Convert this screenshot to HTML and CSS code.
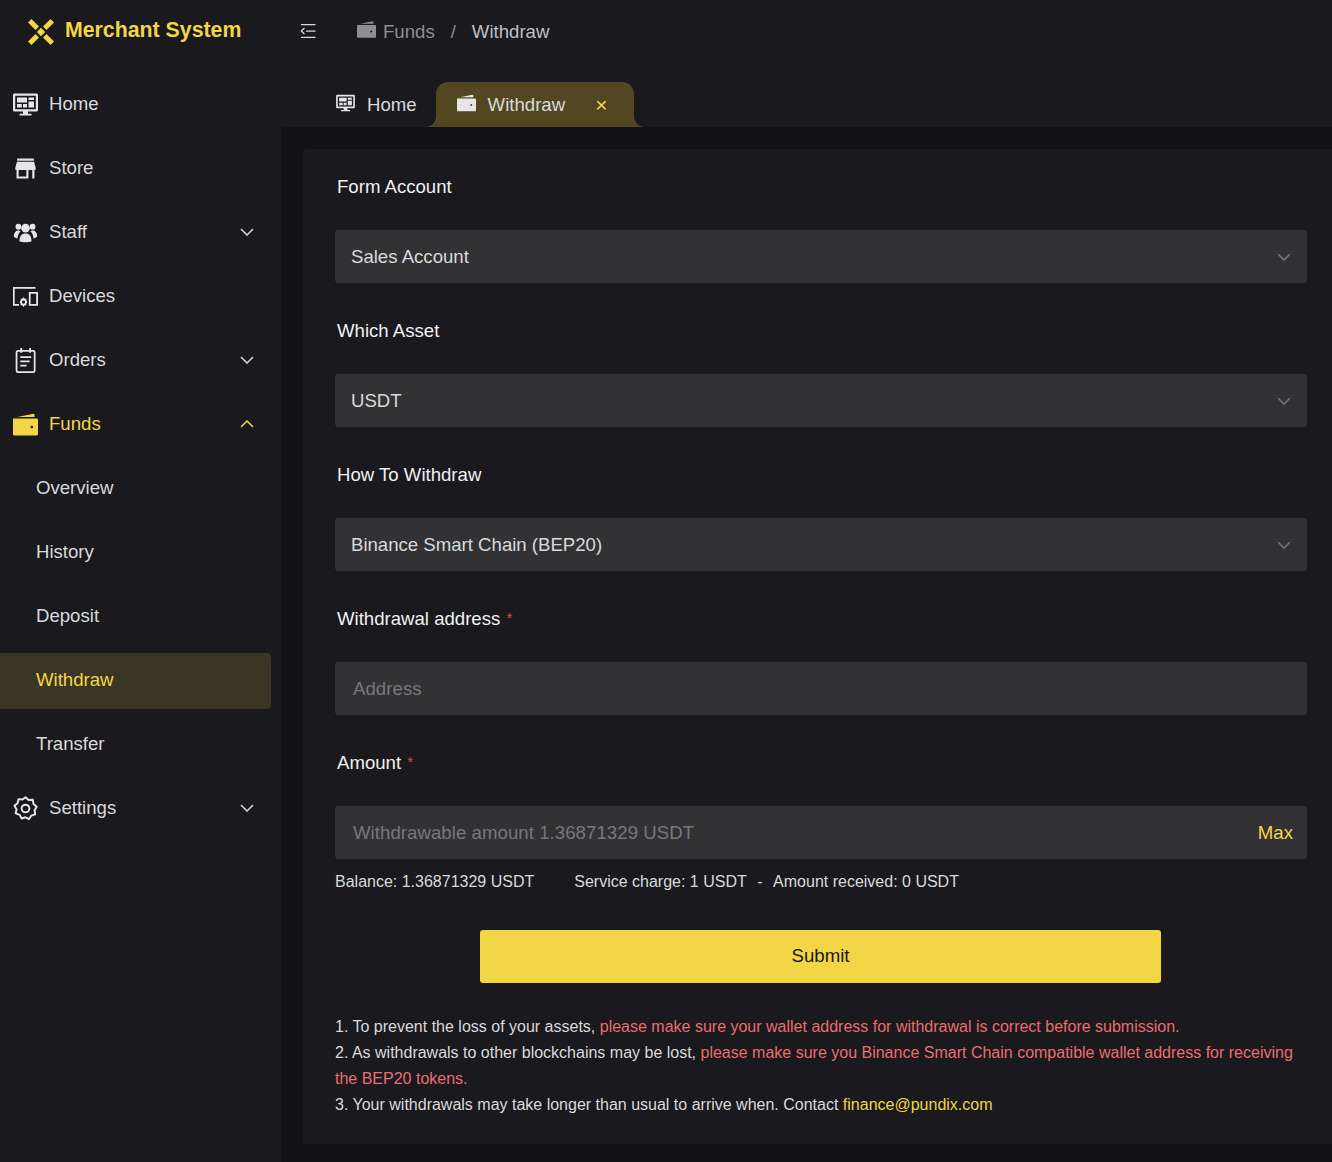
FILE: index.html
```html
<!DOCTYPE html>
<html lang="en">
<head>
<meta charset="utf-8">
<title>Merchant System</title>
<link rel="stylesheet" href="styles.css">
</head>
<body>
<svg class="defs" width="0" height="0" aria-hidden="true">
  <defs>
    <symbol id="i-wallet" viewBox="0 0 25 22">
      <path d="M0.500 4.200 20.500 0.200c.6-.1 1 .2 1 .8v2.400H5Z"/>
      <path fill-rule="evenodd" d="M0 5h23.800c.7 0 1.200.5 1.200 1.200v14.600c0 .7-.5 1.200-1.200 1.200H1.200C.5 22 0 21.500 0 20.800Zm17.500 8.500a1.300 1.300 0 1 0 2.600 0 1.300 1.300 0 0 0-2.600 0Z"/>
    </symbol>
    <symbol id="i-monitor" viewBox="0 0 25 24">
      <path fill-rule="evenodd" d="M1.500 1h22c.8 0 1.500.7 1.500 1.500v15c0 .8-.7 1.500-1.500 1.500H15v2.200h3.500V23h-12v-1.800H10V19H1.500C.7 19 0 18.300 0 17.500v-15C0 1.700.7 1 1.500 1Zm.7 2.200v13.600h20.600V3.200Z"/>
      <path d="M4 5h10v5H4ZM15.500 5H21v2.500h-5.500ZM15.500 9H21v6h-5.500ZM4 11.500h4.800V15H4ZM10 11.500h4V15h-4Z"/>
    </symbol>
    <symbol id="i-chev" viewBox="0 0 14 8">
      <path d="M1 1l6 6 6-6" fill="none" stroke="currentColor" stroke-width="1.500"/>
    </symbol>
  </defs>
</svg>
<div class="app">
  <aside class="sidebar">
    <div class="logo">
      <svg class="logo-mark" viewBox="0 0 26 26" aria-hidden="true">
        <path d="M3.500 0 11 7.500 7.500 11 0 3.500ZM22.500 0 26 3.500 18.500 11 15 7.500ZM7.500 15 11 18.500 3.500 26 0 22.500ZM18.500 15 26 22.500 22.500 26 15 18.500Z"/>
        <path d="M13 8.800 17.200 13 13 17.200 8.800 13Z"/>
      </svg>
      <span class="logo-text">Merchant System</span>
    </div>
    <nav class="menu">
      <a class="item"><svg class="ic"><use href="#i-monitor"/></svg><span>Home</span></a>
      <a class="item">
        <svg class="ic" viewBox="0 0 24 24"><path fill-rule="evenodd" d="M4 2.400h16v2.200H4ZM3.800 5.600h16.400l1.600 5.600v2h-1.200v8.400H3.400v-8.400H2.200v-2ZM5.400 13.500v6.200h7.400v-6.200Zm9.400 0v8.100h3.700v-8.100Z"/></svg>
        <span>Store</span>
      </a>
      <a class="item">
        <svg class="ic" viewBox="0 0 24 24"><circle cx="12" cy="7.800" r="4.100"/><circle cx="5.200" cy="6.500" r="2.800"/><circle cx="18.800" cy="6.500" r="2.800"/><path d="M6.200 20.500c0-5 2-7.500 5.800-7.500s5.800 2.500 5.800 7.500c-3 1.300-8.600 1.300-11.600 0ZM.8 15.800c0-3.200 1.600-5.800 4.200-5.800 1 0 1.800.4 2.200 1-1.800 1.600-2.700 3.700-2.900 6.700C3 17.500 1.600 16.800.8 15.800ZM23.200 15.800c0-3.200-1.600-5.800-4.200-5.800-1 0-1.800.4-2.200 1 1.800 1.600 2.700 3.700 2.900 6.700 1.300-.2 2.700-.9 3.500-1.900Z"/></svg>
        <span>Staff</span><svg class="chev"><use href="#i-chev"/></svg>
      </a>
      <a class="item">
        <svg class="ic" viewBox="0 0 25 25"><path d="M0 3h22.500v1.700H1.700V20H6v1.700H0Z"/><path fill-rule="evenodd" d="M15.800 8h9.200v13.700h-9.200Zm1.800 1.800v10.100h5.600V9.800ZM10.500 13.200l1.100 1.400 1.700.3.200 1.800.9 1.400-.9 1.400-.2 1.800-1.700.3-1.100 1.400-1.100-1.400-1.700-.3-.2-1.800-.9-1.400.9-1.400.2-1.800 1.700-.3Zm0 3.300a1.600 1.600 0 1 0 0 3.200 1.600 1.600 0 0 0 0-3.200Z"/></svg>
        <span>Devices</span>
      </a>
      <a class="item">
        <svg class="ic" viewBox="0 0 24 24"><path d="M7 0h1.800v4.500H7ZM15.500 0h1.800v4.500h-1.800Z"/><rect x="3.400" y="2.800" width="17.400" height="20.400" rx="1.500" fill="none" stroke="currentColor" stroke-width="1.700"/><path d="M7 8h10.500v1.700H7ZM7 12h9v1.700H7ZM7 16h6v1.700H7Z"/></svg>
        <span>Orders</span><svg class="chev"><use href="#i-chev"/></svg>
      </a>
      <a class="item active">
        <svg class="ic"><use href="#i-wallet"/></svg>
        <span>Funds</span><svg class="chev up"><use href="#i-chev"/></svg>
      </a>
      <a class="item sub">Overview</a>
      <a class="item sub">History</a>
      <a class="item sub">Deposit</a>
      <a class="item sub selected">Withdraw</a>
      <a class="item sub">Transfer</a>
      <a class="item">
        <svg class="ic" viewBox="0 0 24 24"><path d="M12 1.200l3 2.700 4-.2.700 3.900 3 2.700-2 3.400.6 3.900-3.800 1.300-2.200 3.300-3.300-1.800-3.700 1.200-1.900-3.500-3.800-1.400.8-3.900-2-3.400 3-2.500.9-3.900 3.900.3Z" fill="none" stroke="currentColor" stroke-width="1.900" stroke-linejoin="round"/><circle cx="12" cy="12" r="3.700" fill="none" stroke="currentColor" stroke-width="1.900"/></svg>
        <span>Settings</span><svg class="chev"><use href="#i-chev"/></svg>
      </a>
    </nav>
  </aside>
  <main class="main">
    <header class="topbar">
      <svg class="collapse" viewBox="0 0 16 14" aria-hidden="true"><path d="M1 0h14.500v1.300H1ZM6 6.400h9.500v1.300H6ZM1 12.700h14.500V14H1Z"/><path class="collapse-arrow" d="M4.500 4 1.300 7l3.200 3"/></svg>
      <div class="crumbs">
        <svg class="crumb-ic"><use href="#i-wallet"/></svg>
        <span class="crumb-dim">Funds</span>
        <span class="crumb-sep">/</span>
        <span class="crumb-cur">Withdraw</span>
      </div>
    </header>
    <div class="tabs">
      <div class="tab"><svg class="tab-ic"><use href="#i-monitor"/></svg><span class="tab-label">Home</span></div>
      <div class="tab tab-on"><svg class="tab-ic"><use href="#i-wallet"/></svg><span class="tab-label">Withdraw</span><span class="tab-x">×</span></div>
    </div>
    <div class="content">
      <section class="card">
        <label class="lbl">Form Account</label>
        <div class="field"><span>Sales Account</span><svg class="sel-chev"><use href="#i-chev"/></svg></div>
        <label class="lbl">Which Asset</label>
        <div class="field"><span>USDT</span><svg class="sel-chev"><use href="#i-chev"/></svg></div>
        <label class="lbl">How To Withdraw</label>
        <div class="field"><span>Binance Smart Chain (BEP20)</span><svg class="sel-chev"><use href="#i-chev"/></svg></div>
        <label class="lbl">Withdrawal address <sup class="req">*</sup></label>
        <div class="field input"><span class="ph">Address</span></div>
        <label class="lbl">Amount <sup class="req">*</sup></label>
        <div class="field input amount"><span class="ph">Withdrawable amount 1.36871329 USDT</span><span class="max">Max</span></div>
        <div class="fees">
          <span>Balance: 1.36871329 USDT</span>
          <span>Service charge: 1 USDT<span class="dash">-</span>Amount received: 0 USDT</span>
        </div>
        <div class="submit-row"><button class="submit" type="button">Submit</button></div>
        <div class="notes">
          <p>1. To prevent the loss of your assets, <span class="warn">please make sure your wallet address for withdrawal is correct before submission.</span></p>
          <p>2. As withdrawals to other blockchains may be lost, <span class="warn">please make sure you Binance Smart Chain compatible wallet address for receiving the BEP20 tokens.</span></p>
          <p>3. Your withdrawals may take longer than usual to arrive when. Contact <span class="mail">finance@pundix.com</span></p>
        </div>
      </section>
    </div>
  </main>
</div>
</body>
</html>
```
FILE: styles.css
```css
* { box-sizing: border-box; }
html, body { margin: 0; height: 100%; }
body {
  background: #19191e;
  color: #d9d9db;
  font-family: "Liberation Sans", Arial, sans-serif;
  font-size: 18.6px;
  overflow: hidden;
}
.defs { position: absolute; }
svg { fill: currentColor; }
.app { display: flex; height: 1162px; }

.sidebar { width: 281px; flex: none; background: #19191e; }
.logo { display: flex; align-items: center; height: 61px; padding-left: 28px; gap: 11px; color: #f2d646; }
.logo-mark { width: 26px; height: 26px; margin-top: 2px; }
.logo-text { font-size: 21.3px; font-weight: 700; margin-top: -1px; }
.menu { display: flex; flex-direction: column; gap: 8px; padding-top: 16px; }
.item { display: flex; align-items: center; height: 56px; width: 271px; padding: 0 0 2px 13px; border-radius: 0 4px 4px 0; }
.ic { width: 25px; height: 25px; flex: none; margin-right: 11px; color: #e6e6e8; }
.chev { width: 14px; height: 8px; margin-left: auto; margin-right: 17px; }
.chev.up { transform: rotate(180deg); }
.active { color: #f2d646; }
.active .ic { color: #f2d646; }
.sub { padding-left: 36px; }
.selected { background: #3a3625; color: #f2d646; }

.main { flex: 1; min-width: 0; display: flex; flex-direction: column; }
.topbar { height: 62px; display: flex; align-items: center; padding-left: 19px; flex: none; }
.collapse { width: 16px; height: 14px; color: #d9d9db; margin-right: 41px; }
.collapse-arrow { fill: none; stroke: currentColor; stroke-width: 1.300; }
.crumbs { display: flex; align-items: center; color: #8d8e91; padding-top: 1px; }
.crumb-ic { width: 19px; height: 17px; margin-right: 7px; margin-top: -4px; }
.crumb-sep { margin: 0 16px; }
.crumb-cur { color: #bfc0c2; }

.tabs { height: 65px; flex: none; display: flex; align-items: flex-end; padding-left: 55px; }
.tab { height: 45px; display: flex; align-items: center; }
.tab-ic { width: 19px; height: 18px; margin-right: 12px; color: #e6e6e8; margin-top: -3px; }
.tab-label { padding-top: 1px; }
.tab-on { position: relative; background: #524720; border-radius: 12px 12px 0 0; margin-left: 19px; padding: 0 26px 0 21px; width: 198px; }
.tab-on::before, .tab-on::after { content: ""; position: absolute; bottom: 0; width: 10px; height: 10px; background: radial-gradient(circle at var(--cx) 0, transparent 9.500px, #524720 10px); }
.tab-on::before { left: -10px; --cx: 0; }
.tab-on::after { right: -10px; --cx: 100%; }
.tab-x { margin-left: auto; color: #f2d646; font-size: 21px; line-height: 1; }

.content { flex: 1; background: #121216; padding: 22px 0 18px 22px; min-height: 0; }
.card { height: 100%; background: #19191e; padding: 16px 25px 0 32px; border-radius: 4px 0 0 4px; }
.lbl { display: block; height: 65px; padding: 11px 0 0 2px; line-height: 22px; color: #f0f0f1; }
.req { color: #e5484d; font-size: 15px; line-height: 0; vertical-align: 2px; margin-left: 1px; }
.field { height: 53px; margin-bottom: 26px; padding: 1px 16px 0 16px; background: #323234; border-radius: 4px; display: flex; align-items: center; }
.sel-chev { width: 14px; height: 8px; margin-left: auto; color: #77787b; }
.input { padding: 1px 14px 0 18px; }
.ph { color: #77787b; letter-spacing: .06px; }
.max { margin-left: auto; color: #f2d646; }
.amount { margin-bottom: 0; }
.fees { display: flex; gap: 40px; font-size: 16px; height: 71px; padding-top: 14px; line-height: 18px; color: #d9d9db; }
.dash { margin: 0 10.500px; }
.submit-row { display: flex; justify-content: center; }
.submit { width: 681px; height: 53px; margin-right: 1px; padding: 0 0 2px; border: 0; border-radius: 3px; background: #f2d646; color: #17181c; font: inherit; }
.notes { margin-top: 31px; font-size: 16px; line-height: 26px; color: #d9d9db; }
.notes p { margin: 0; }
.warn { color: #e96e6e; }
.mail { color: #f2d646; }
```
